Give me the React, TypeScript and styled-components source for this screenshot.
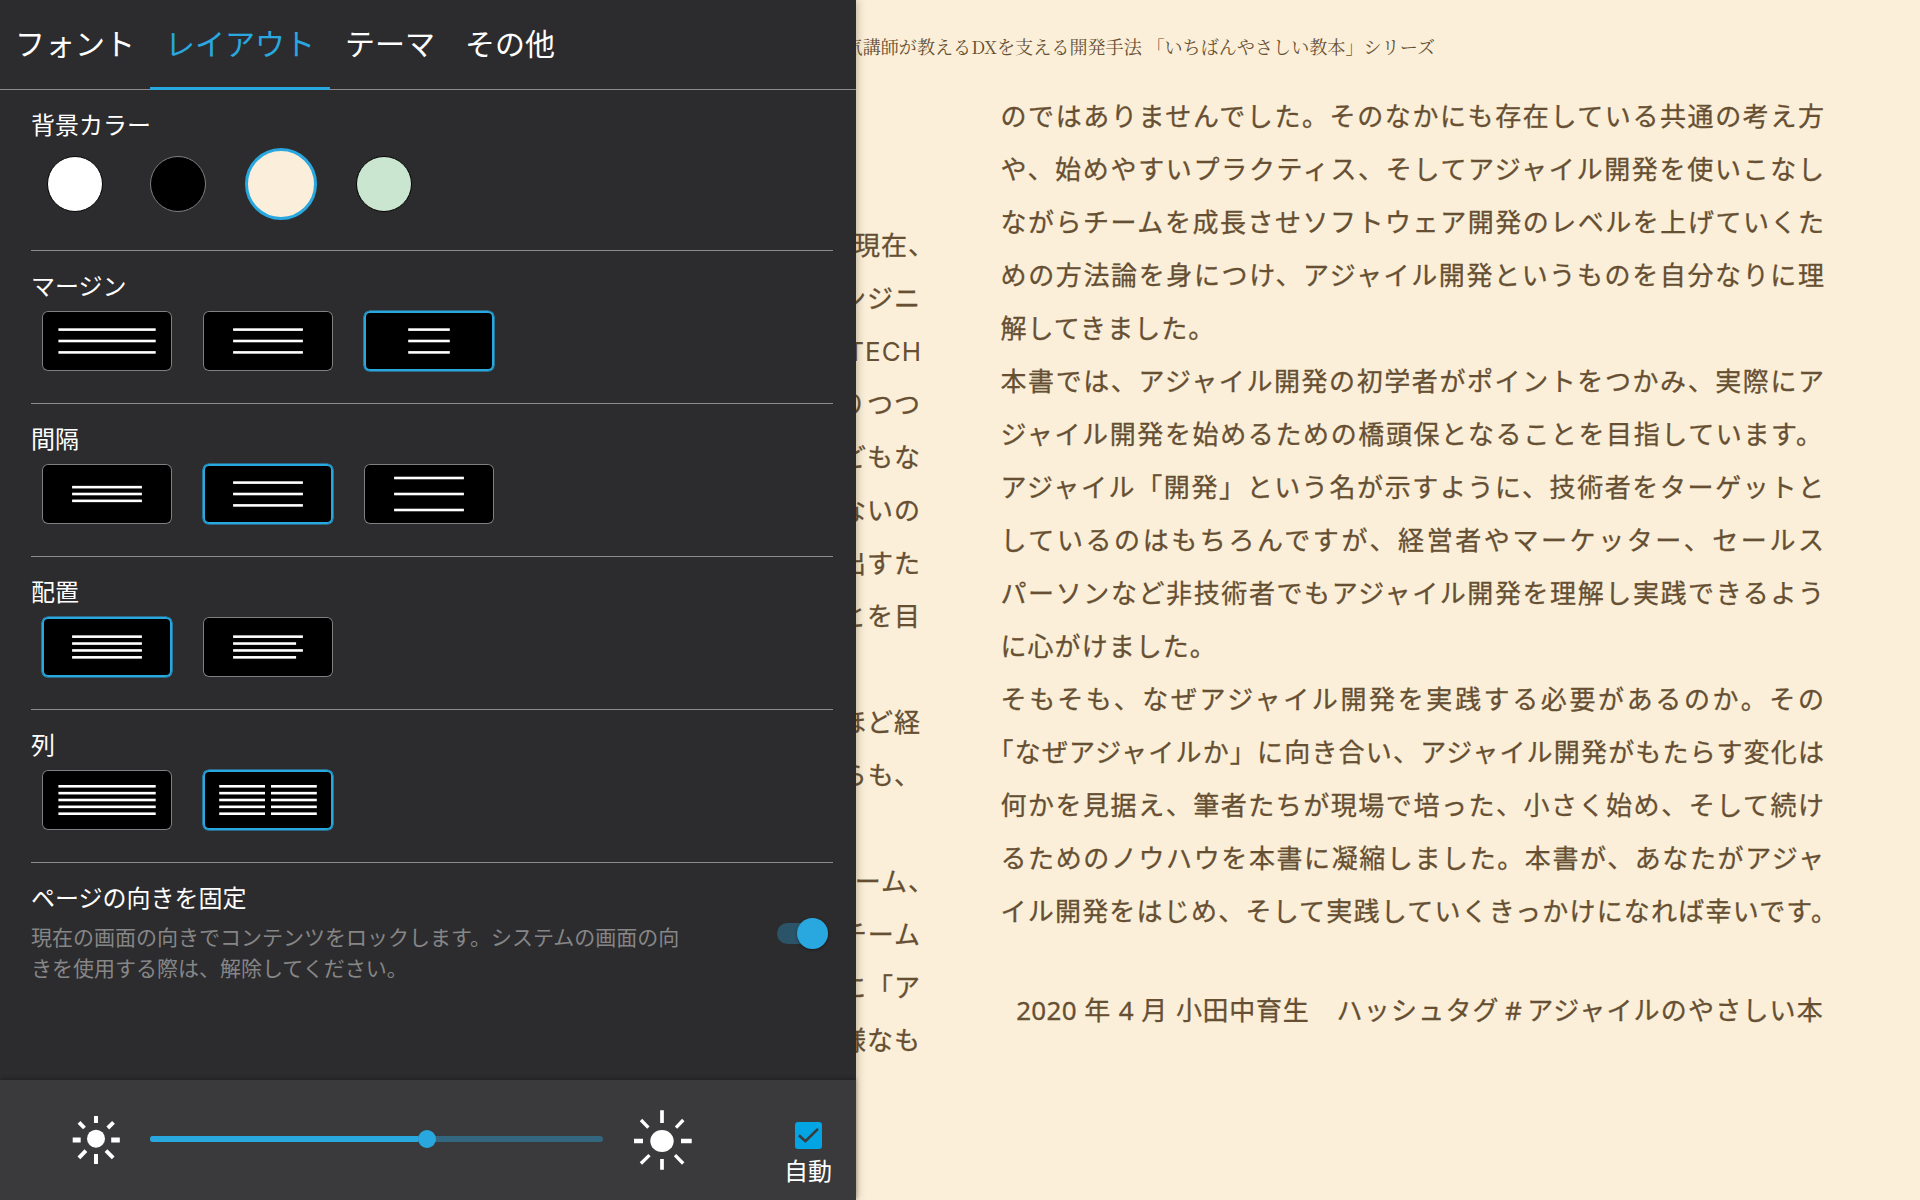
import React from 'react';
import styled, { createGlobalStyle } from 'styled-components';

const BLUE = '#29a8e0';
const UI = '"Noto Sans CJK JP", sans-serif';

const Global = createGlobalStyle`
  * { box-sizing: border-box; }
  body { margin: 0; background: #fbefd9; font-family: ${UI}; }
`;

const Screen = styled.div`
  display: flex;
  width: 1920px;
  height: 1200px;
  overflow: hidden;
  background: #fbefd9;
`;

const Panel = styled.aside`
  display: flex;
  flex-direction: column;
  width: 856px;
  height: 1200px;
  flex: none;
  z-index: 1;
  background: #2c2c2e;
  color: #fff;
  box-shadow: 0 0 9px rgba(60, 45, 20, 0.4);
`;

const Tabs = styled.nav`
  display: flex;
  height: 90px;
  flex: none;
  border-bottom: 1px solid #8c8c8d;
`;

const Tab = styled.div<{ $active?: boolean }>`
  height: 90px;
  padding: 0 15px;
  font-size: 30px;
  line-height: 85px;
  white-space: nowrap;
  color: ${(p) => (p.$active ? BLUE : '#fff')};
  border-bottom: ${(p) => (p.$active ? `3px solid ${BLUE}` : '0')};
`;

const Sections = styled.div`
  display: flex;
  flex-direction: column;
  flex: 1;
  padding: 8px 23px 0 31px;
`;

const Section = styled.section`
  height: 153px;
  flex: none;
  border-bottom: 1px solid #8c8c8d;
`;

const Title = styled.h2<{ $raise?: number }>`
  margin: 0;
  padding-top: ${(p) => 16 - (p.$raise || 0)}px;
  height: 60px;
  font-size: 24px;
  font-weight: 400;
  line-height: 36px;
`;

const Options = styled.div`
  display: flex;
  gap: 31px;
  padding-left: 11px;
`;

const Option = styled.div<{ $on?: boolean }>`
  display: flex;
  width: 130px;
  height: 60px;
  border-radius: 6px;
  background: #000;
  box-shadow: ${(p) => (p.$on ? `inset 0 0 0 2px ${BLUE}, 0 0 0 0.6px ${BLUE}` : 'inset 0 0 0 1px #808083')};
`;

const Swatches = styled.div`
  display: flex;
  align-items: center;
  height: 72px;
  margin-top: -10px;
`;

const SwatchCell = styled.div`
  display: flex;
  justify-content: center;
  width: 103px;
  &:first-child { margin-left: -7.5px; }
`;

const Swatch = styled.div<{ $color: string; $edge: string; $on?: boolean }>`
  width: ${(p) => (p.$on ? 72 : 56)}px;
  height: ${(p) => (p.$on ? 72 : 56)}px;
  border-radius: 50%;
  background: ${(p) => p.$color};
  border: ${(p) => (p.$on ? 3 : 1)}px solid ${(p) => p.$edge};
`;

const LockRow = styled.div`
  display: flex;
  justify-content: space-between;
`;

const LockText = styled.div`
  width: 660px;
`;

const LockTitle = styled.h2`
  margin: 0;
  padding-top: 16px;
  font-size: 24px;
  font-weight: 400;
  line-height: 36px;
`;

const LockNote = styled.p`
  margin: 6px 0 0;
  font-size: 21px;
  line-height: 31px;
  color: #868687;
  white-space: nowrap;
`;

const Toggle = styled.div`
  display: flex;
  align-items: center;
  justify-content: flex-end;
  width: 51px;
  height: 21px;
  margin: 60px 5px 0 0;
  border-radius: 11px;
  background: #2b5468;
`;

const Thumb = styled.div`
  width: 31px;
  height: 31px;
  flex: none;
  border-radius: 50%;
  background: ${BLUE};
  box-shadow: 0 1px 3px rgba(0, 0, 0, 0.4);
`;

const Brightness = styled.footer`
  display: flex;
  height: 120px;
  flex: none;
  background: #3a3a3c;
  box-shadow: 0 -1px 4px rgba(0, 0, 0, 0.3);
`;

const SunBox = styled.div<{ $width: number; $left: number; $top: number }>`
  width: ${(p) => p.$width}px;
  flex: none;
  padding: ${(p) => p.$top}px 0 0 ${(p) => p.$left}px;
  svg { display: block; }
`;

const Track = styled.div`
  display: flex;
  align-items: center;
  width: 453px;
  height: 6px;
  margin-top: 56px;
  flex: none;
  border-radius: 3px;
  background: #33677f;
`;

const Fill = styled.div`
  width: 268px;
  height: 6px;
  border-radius: 3px 0 0 3px;
  background: ${BLUE};
`;

const Knob = styled.div`
  width: 18px;
  height: 18px;
  border-radius: 50%;
  background: ${BLUE};
`;

const Auto = styled.div`
  display: flex;
  flex-direction: column;
  align-items: center;
  width: 60px;
  padding-top: 42px;
  font-size: 24px;
  line-height: 36px;
`;

const Check = styled.div`
  display: flex;
  width: 27px;
  height: 27px;
  margin-bottom: 3px;
  border-radius: 3px;
  background: #03a4e4;
`;

const Reader = styled.main`
  display: flex;
  flex-direction: column;
  flex: 1;
  min-width: 0;
  color: #664f32;
`;

const BookTitle = styled.header`
  display: flex;
  justify-content: flex-end;
  width: 579px;
  height: 89.5px;
  overflow: hidden;
  font-family: "Noto Serif CJK JP", "Liberation Serif", "Noto Sans CJK JP", serif;
  font-size: 18.1px;
  line-height: 92px;
  white-space: nowrap;
`;

const Spread = styled.div`
  display: flex;
  gap: 80.5px;
  font-family: "Noto Sans", "Noto Sans CJK JP", sans-serif;
  font-size: 26px;
  line-height: 53px;
  white-space: nowrap;
  -webkit-text-stroke: 0.3px #664f32;
`;

const LeftPage = styled.div`
  display: flex;
  flex-direction: column;
  width: 64px;
  padding-top: 129px;
  overflow: hidden;
`;

const LeftLine = styled.div<{ $hang?: boolean; $latin?: boolean }>`
  display: flex;
  justify-content: flex-end;
  height: 53px;
  font-family: ${(p) => (p.$latin ? 'Inter, "Noto Sans", sans-serif' : 'inherit')};
  letter-spacing: 1px;
  margin-right: ${(p) => (p.$hang ? -15 : p.$latin ? -2 : -1)}px;
  -webkit-text-stroke-width: ${(p) => (p.$latin ? 0 : 0.3)}px;
`;

const RightPage = styled.div`
  width: 823.5px;
`;

const Line = styled.div<{ $tracking?: number; $shift?: number; $extra?: number }>`
  height: 53px;
  margin-left: ${(p) => p.$shift || 0}px;
  margin-right: ${(p) => -(p.$extra || 0)}px;
  letter-spacing: ${(p) => p.$tracking || 0}px;
  text-align: left;
  text-align-last: ${(p) => (p.$tracking ? 'left' : 'justify')};
`;

const Signature = styled.div`
  margin-top: 46px;
  height: 53px;
  letter-spacing: 1.2px;
  word-spacing: -0.6px;
  text-align: right;
`;

const Digits = styled.span`
  letter-spacing: 0.3px;
`;

const Author = styled.span`
  letter-spacing: 0.7px;
`;

const Hash = styled.span`
  letter-spacing: 0;
  word-spacing: -1.5px;
`;

type Bar = [number, number, number];

const stack = (x: number, w: number, pitch: number, n: number): Bar[] =>
  Array.from({ length: n }, (_, i) => [x, 30 + (i - (n - 1) / 2) * pitch, w]);

const BarIcon = ({ bars }: { bars: Bar[] }) => (
  <svg width="130" height="60" viewBox="0 0 130 60">
    {bars.map(([x, y, w], i) => (
      <rect key={i} x={x} y={y - 1.3} width={w} height={2.6} fill="#fff" />
    ))}
  </svg>
);

const groups: { title: string; selected: number; icons: Bar[][] }[] = [
  {
    title: 'マージン',
    selected: 2,
    icons: [stack(16.4, 97.3, 11.4, 3), stack(30.1, 69.8, 11.4, 3), stack(44.2, 41.6, 11.4, 3)],
  },
  {
    title: '間隔',
    selected: 1,
    icons: [stack(30.1, 69.8, 6.85, 3), stack(30.1, 69.8, 11.4, 3), stack(30.1, 69.8, 16, 3)],
  },
  {
    title: '配置',
    selected: 0,
    icons: [
      stack(30.1, 69.8, 6.9, 4),
      stack(30.1, 69.8, 6.9, 4).map(([x, y, w], i): Bar => [x, y, i % 2 ? 63 : w]),
    ],
  },
  {
    title: '列',
    selected: 1,
    icons: [stack(16.4, 97.3, 6.85, 5), [...stack(16.2, 45.8, 6.85, 5), ...stack(68, 45.8, 6.85, 5)]],
  },
];

const DimSun = () => (
  <svg width="50" height="52" viewBox="0 0 50 52" fill="none" stroke="#fff">
    <circle cx="25" cy="24.7" r="9" fill="#fff" stroke="none" />
    <path d="M25 2v7M25 40v10" strokeWidth="4" />
    <path d="M1.7 26h8M40.2 26h8.6" strokeWidth="5.2" />
    <path d="M8 8.3l5.5 5.7M42.5 8.3L36.8 14M7.9 43.9l7-7.2M42.2 43.9L35 36.7" strokeWidth="3.9" />
  </svg>
);

const BrightSun = () => (
  <svg width="62" height="64" viewBox="0 0 62 64" fill="none" stroke="#fff">
    <ellipse cx="30" cy="32" rx="11.7" ry="11.1" fill="#fff" stroke="none" />
    <path d="M30 1.3V14M30 50v10.7" strokeWidth="3.7" />
    <path d="M2 32h9M49 32h10.7" strokeWidth="4.4" />
    <path d="M9 11l7.4 7.7M51.3 11L44 18.7M8.9 54.5l8.6-8.4M51.2 54.5L43 46.1" strokeWidth="3.3" />
  </svg>
);

const leftLines: { text: string; hang?: boolean; latin?: boolean }[] = [
  { text: '現在、', hang: true },
  { text: 'ンジニ' },
  { text: 'TECH', latin: true },
  { text: 'りつつ' },
  { text: 'どもな' },
  { text: 'ないの' },
  { text: '出すた' },
  { text: 'とを目' },
  { text: '' },
  { text: 'ほど経' },
  { text: 'らも、' },
  { text: '' },
  { text: 'ーム、', hang: true },
  { text: 'チーム' },
  { text: 'に「ア' },
  { text: '様なも' },
];

const rightLines: { text: string; tracking?: number; shift?: number; extra?: number }[] = [
  { text: 'のではありませんでした。そのなかにも存在している共通の考え方' },
  { text: 'や、始めやすいプラクティス、そしてアジャイル開発を使いこなし' },
  { text: 'ながらチームを成長させソフトウェア開発のレベルを上げていくた' },
  { text: 'めの方法論を身につけ、アジャイル開発というものを自分なりに理' },
  { text: '解してきました。', tracking: 1.05 },
  { text: '本書では、アジャイル開発の初学者がポイントをつかみ、実際にア' },
  { text: 'ジャイル開発を始めるための橋頭保となることを目指しています。', tracking: 1.62 },
  { text: 'アジャイル「開発」という名が示すように、技術者をターゲットと' },
  { text: 'しているのはもちろんですが、経営者やマーケッター、セールス' },
  { text: 'パーソンなど非技術者でもアジャイル開発を理解し実践できるよう' },
  { text: 'に心がけました。', tracking: 1.05 },
  { text: 'そもそも、なぜアジャイル開発を実践する必要があるのか。その' },
  { text: '「なぜアジャイルか」に向き合い、アジャイル開発がもたらす変化は', shift: -13 },
  { text: '何かを見据え、筆者たちが現場で培った、小さく始め、そして続け' },
  { text: 'るためのノウハウを本書に凝縮しました。本書が、あなたがアジャ' },
  { text: 'イル開発をはじめ、そして実践していくきっかけになれば幸いです。', extra: 13 },
];

export default function App() {
  return (
    <>
      <Global />
      <Screen>
        <Panel>
          <Tabs>
            <Tab>フォント</Tab>
            <Tab $active>レイアウト</Tab>
            <Tab>テーマ</Tab>
            <Tab>その他</Tab>
          </Tabs>
          <Sections>
            <Section>
              <Title $raise={8}>背景カラー</Title>
              <Swatches>
                <SwatchCell><Swatch $color="#fff" $edge="#000" /></SwatchCell>
                <SwatchCell><Swatch $color="#000" $edge="#808083" /></SwatchCell>
                <SwatchCell><Swatch $color="#fbefdb" $edge={BLUE} $on /></SwatchCell>
                <SwatchCell><Swatch $color="#cae6d0" $edge="#000" /></SwatchCell>
              </Swatches>
            </Section>
            {groups.map((g) => (
              <Section key={g.title}>
                <Title>{g.title}</Title>
                <Options>
                  {g.icons.map((bars, i) => (
                    <Option key={i} $on={i === g.selected}><BarIcon bars={bars} /></Option>
                  ))}
                </Options>
              </Section>
            ))}
            <LockRow>
              <LockText>
                <LockTitle>ページの向きを固定</LockTitle>
                <LockNote>
                  現在の画面の向きでコンテンツをロックします。システムの画面の向<br />
                  きを使用する際は、解除してください。
                </LockNote>
              </LockText>
              <Toggle><Thumb /></Toggle>
            </LockRow>
          </Sections>
          <Brightness>
            <SunBox $width={150} $left={71} $top={34}><DimSun /></SunBox>
            <Track><Fill /><Knob /></Track>
            <SunBox $width={175} $left={29} $top={29}><BrightSun /></SunBox>
            <Auto>
              <Check>
                <svg width="27" height="27" viewBox="0 0 27 27">
                  <path d="M3.9 13.3l6.5 6L23 6.9" fill="none" stroke="#3a3a3c" strokeWidth="2.6" />
                </svg>
              </Check>
              自動
            </Auto>
          </Brightness>
        </Panel>
        <Reader>
          <BookTitle>気講師が教えるDXを支える開発手法 「いちばんやさしい教本」シリーズ</BookTitle>
          <Spread>
            <LeftPage>
              {leftLines.map((l, i) => (
                <LeftLine key={i} $hang={l.hang} $latin={l.latin}>{l.text}</LeftLine>
              ))}
            </LeftPage>
            <RightPage>
              {rightLines.map((l) => (
                <Line key={l.text} $tracking={l.tracking} $shift={l.shift} $extra={l.extra}>{l.text}</Line>
              ))}
              <Signature>
                <Digits>2020</Digits> 年 <Digits>4</Digits> 月 <Author>小田中育生</Author>　ハッシュタグ<Hash> # </Hash>アジャイルのやさしい本
              </Signature>
            </RightPage>
          </Spread>
        </Reader>
      </Screen>
    </>
  );
}
